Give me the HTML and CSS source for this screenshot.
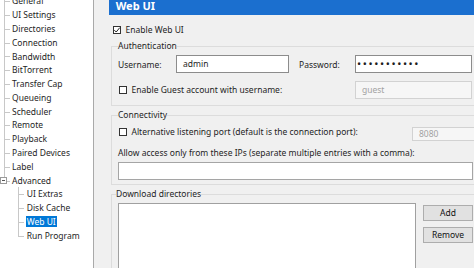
FILE: index.html
```html
<!DOCTYPE html>
<html>
<head>
<meta charset="utf-8">
<link rel="stylesheet" href="styles.css">
</head>
<body>
<div class="window">
  <nav class="tree">
    <ul class="root">
      <li><span class="lbl">General</span></li>
      <li><span class="lbl">UI Settings</span></li>
      <li><span class="lbl">Directories</span></li>
      <li><span class="lbl">Connection</span></li>
      <li><span class="lbl">Bandwidth</span></li>
      <li><span class="lbl">BitTorrent</span></li>
      <li><span class="lbl">Transfer Cap</span></li>
      <li><span class="lbl">Queueing</span></li>
      <li><span class="lbl">Scheduler</span></li>
      <li><span class="lbl">Remote</span></li>
      <li><span class="lbl">Playback</span></li>
      <li><span class="lbl">Paired Devices</span></li>
      <li><span class="lbl">Label</span></li>
      <li class="last"><span class="toggle"></span><span class="lbl">Advanced</span>
        <ul class="sub">
          <li><span class="lbl">UI Extras</span></li>
          <li><span class="lbl">Disk Cache</span></li>
          <li><span class="lbl sel">Web UI</span></li>
          <li class="last"><span class="lbl">Run Program</span></li>
        </ul>
      </li>
    </ul>
  </nav>
  <main class="panel">
    <div class="title">Web UI</div>
    <div class="content">
      <label class="check first"><span class="box"><svg width="8" height="8" viewBox="0 0 8 8"><path d="M1.3 4.1 L3.2 6 L6.8 1.6" fill="none" stroke="#222" stroke-width="1"/></svg></span>Enable Web UI</label>

      <fieldset class="group auth">
        <legend>Authentication</legend>
        <div class="auth-grid">
          <span class="lab">Username:</span>
          <div class="field">admin</div>
          <span></span>
          <span class="lab">Password:</span>
          <div class="field pw">•••••••••••</div>
          <label class="check guest"><span class="box"></span>Enable Guest account with username:</label>
          <div class="field dis">guest</div>
        </div>
      </fieldset>

      <fieldset class="group conn">
        <legend>Connectivity</legend>
        <div class="port-row">
          <label class="check port"><span class="box"></span>Alternative listening port (default is the connection port):</label>
          <div class="field dis small">8080</div>
        </div>
        <div class="ips-label">Allow access only from these IPs (separate multiple entries with a comma):</div>
        <div class="field ips"></div>
      </fieldset>

      <fieldset class="group dirs">
        <legend>Download directories</legend>
        <div class="dirs-row">
          <div class="listbox"></div>
          <div class="buttons">
            <div class="btn">Add</div>
            <div class="btn">Remove</div>
          </div>
        </div>
      </fieldset>
    </div>
  </main>
</div>
</body>
</html>
```
FILE: styles.css
```css
html, body {
  margin: 0;
  padding: 0;
}
body {
  font-family: "Noto Sans", "Open Sans", sans-serif;
  font-size: 8.5px;
  color: #1e1e1e;
  background: #f0f0f0;
}
.window {
  display: flex;
  width: 474px;
  height: 268px;
  overflow: hidden;
}

/* tree */
.tree {
  flex: none;
  width: 93px;
  background: #ffffff;
  border-right: 1px solid #a9a9a9;
  overflow: hidden;
}
.root, .sub {
  list-style: none;
  margin: 0;
  padding: 0;
}
.root {
  margin-top: -5.7px;
}
.root li {
  position: relative;
  line-height: 13.8px;
  white-space: nowrap;
}
.root > li {
  padding-left: 12px;
}
.root > li::before {
  content: "";
  position: absolute;
  left: 4px;
  top: 0;
  bottom: 0;
  border-left: 1px solid #c8c8c8;
}
.root > li::after {
  content: "";
  position: absolute;
  left: 4px;
  top: 6.9px;
  width: 6px;
  border-top: 1px solid #c8c8c8;
}
.root > li.last::before {
  bottom: auto;
  height: 6.9px;
}
.sub > li {
  padding-left: 14.7px;
}
.sub > li::before {
  content: "";
  position: absolute;
  left: 6px;
  top: 0;
  bottom: 0;
  border-left: 1px solid #c8c8c8;
}
.sub > li::after {
  content: "";
  position: absolute;
  left: 6px;
  top: 6.9px;
  width: 6px;
  border-top: 1px solid #c8c8c8;
}
.sub > li.last::before {
  bottom: auto;
  height: 6.9px;
}
.toggle {
  position: absolute;
  left: 0;
  top: 3px;
  width: 7px;
  height: 7px;
  box-sizing: border-box;
  border: 1px solid #9a9a9a;
  background: #ffffff;
  z-index: 1;
}
.toggle::after {
  content: "";
  position: absolute;
  left: 1px;
  top: 2px;
  width: 3px;
  border-top: 1px solid #555;
}
.lbl.sel {
  display: inline-block;
  line-height: 11px;
  background: #0078d7;
  color: #ffffff;
  padding: 0 1px;
  margin-left: -1px;
}

/* panel */
.panel {
  flex: none;
  width: 620px;
  padding-left: 15px;
  background: #f0f0f0;
}
.title {
  height: 15px;
  background: #1b6fcf;
  color: #ffffff;
  font-weight: bold;
  font-size: 11px;
  line-height: 11px;
  padding-left: 6.7px;
}
.content {
  padding-left: 2px;
}
.check {
  display: flex;
  align-items: center;
  gap: 4.5px;
  height: 12px;
  line-height: 12px;
  white-space: nowrap;
}
.check.first {
  margin-top: 9px;
  padding-left: 2px;
}
.box {
  flex: none;
  width: 8px;
  height: 8px;
  box-sizing: border-box;
  border: 1px solid #333333;
  background: #ffffff;
  display: flex;
}
.box svg {
  margin: -1px;
}
.group {
  margin: 0;
  min-width: 0;
  border: 1px solid #dcdcdc;
}
.group legend {
  padding: 0;
  line-height: 12px;
}
.auth {
  margin-top: 4px;
  padding: 3px 0 6px 6px;
}
.auth-grid {
  display: grid;
  grid-template-columns: 58px 113px 10px 56px 117px;
  grid-auto-rows: 18px;
  row-gap: 8px;
  align-items: center;
}
.check.guest {
  grid-column: 1 / 5;
  padding-left: 1px;
}
.field {
  box-sizing: border-box;
  height: 18px;
  background: #ffffff;
  border: 1px solid #8c8c8c;
  line-height: 16px;
  padding-left: 6px;
  white-space: nowrap;
  overflow: hidden;
}
.field.pw {
  font-size: 11px;
  letter-spacing: 1.6px;
  padding-left: 1px;
}
.field.dis {
  background: #f6f6f6;
  border-color: #d2d2d2;
  color: #a2a2a2;
}
.conn {
  margin-top: 3px;
  padding: 5px 0 4px 6px;
}
.port-row {
  display: flex;
  align-items: flex-start;
}
.check.port {
  width: 293px;
  padding-left: 1px;
}
.field.small {
  width: 70px;
  height: 14px;
  line-height: 12px;
  margin-top: 1px;
}
.ips-label {
  margin-top: 6px;
  line-height: 12px;
  white-space: nowrap;
}
.field.ips {
  margin-top: 3px;
  width: 355px;
  border-color: #a5a5a5;
}
.dirs {
  margin-top: 3px;
  padding: 3px 0 0 6px;
  height: 120px;
}
.dirs legend {
  margin-left: -2px;
}
.dirs-row {
  display: flex;
  gap: 7px;
  align-items: flex-start;
}
.listbox {
  width: 298px;
  height: 90px;
  box-sizing: border-box;
  background: #ffffff;
  border: 1px solid #a0a0a0;
}
.buttons {
  display: flex;
  flex-direction: column;
  gap: 6px;
  margin-top: 2px;
}
.btn {
  width: 50px;
  height: 16px;
  box-sizing: border-box;
  background: #e1e1e1;
  border: 1px solid #adadad;
  text-align: center;
  line-height: 14px;
  color: #111;
}
```
